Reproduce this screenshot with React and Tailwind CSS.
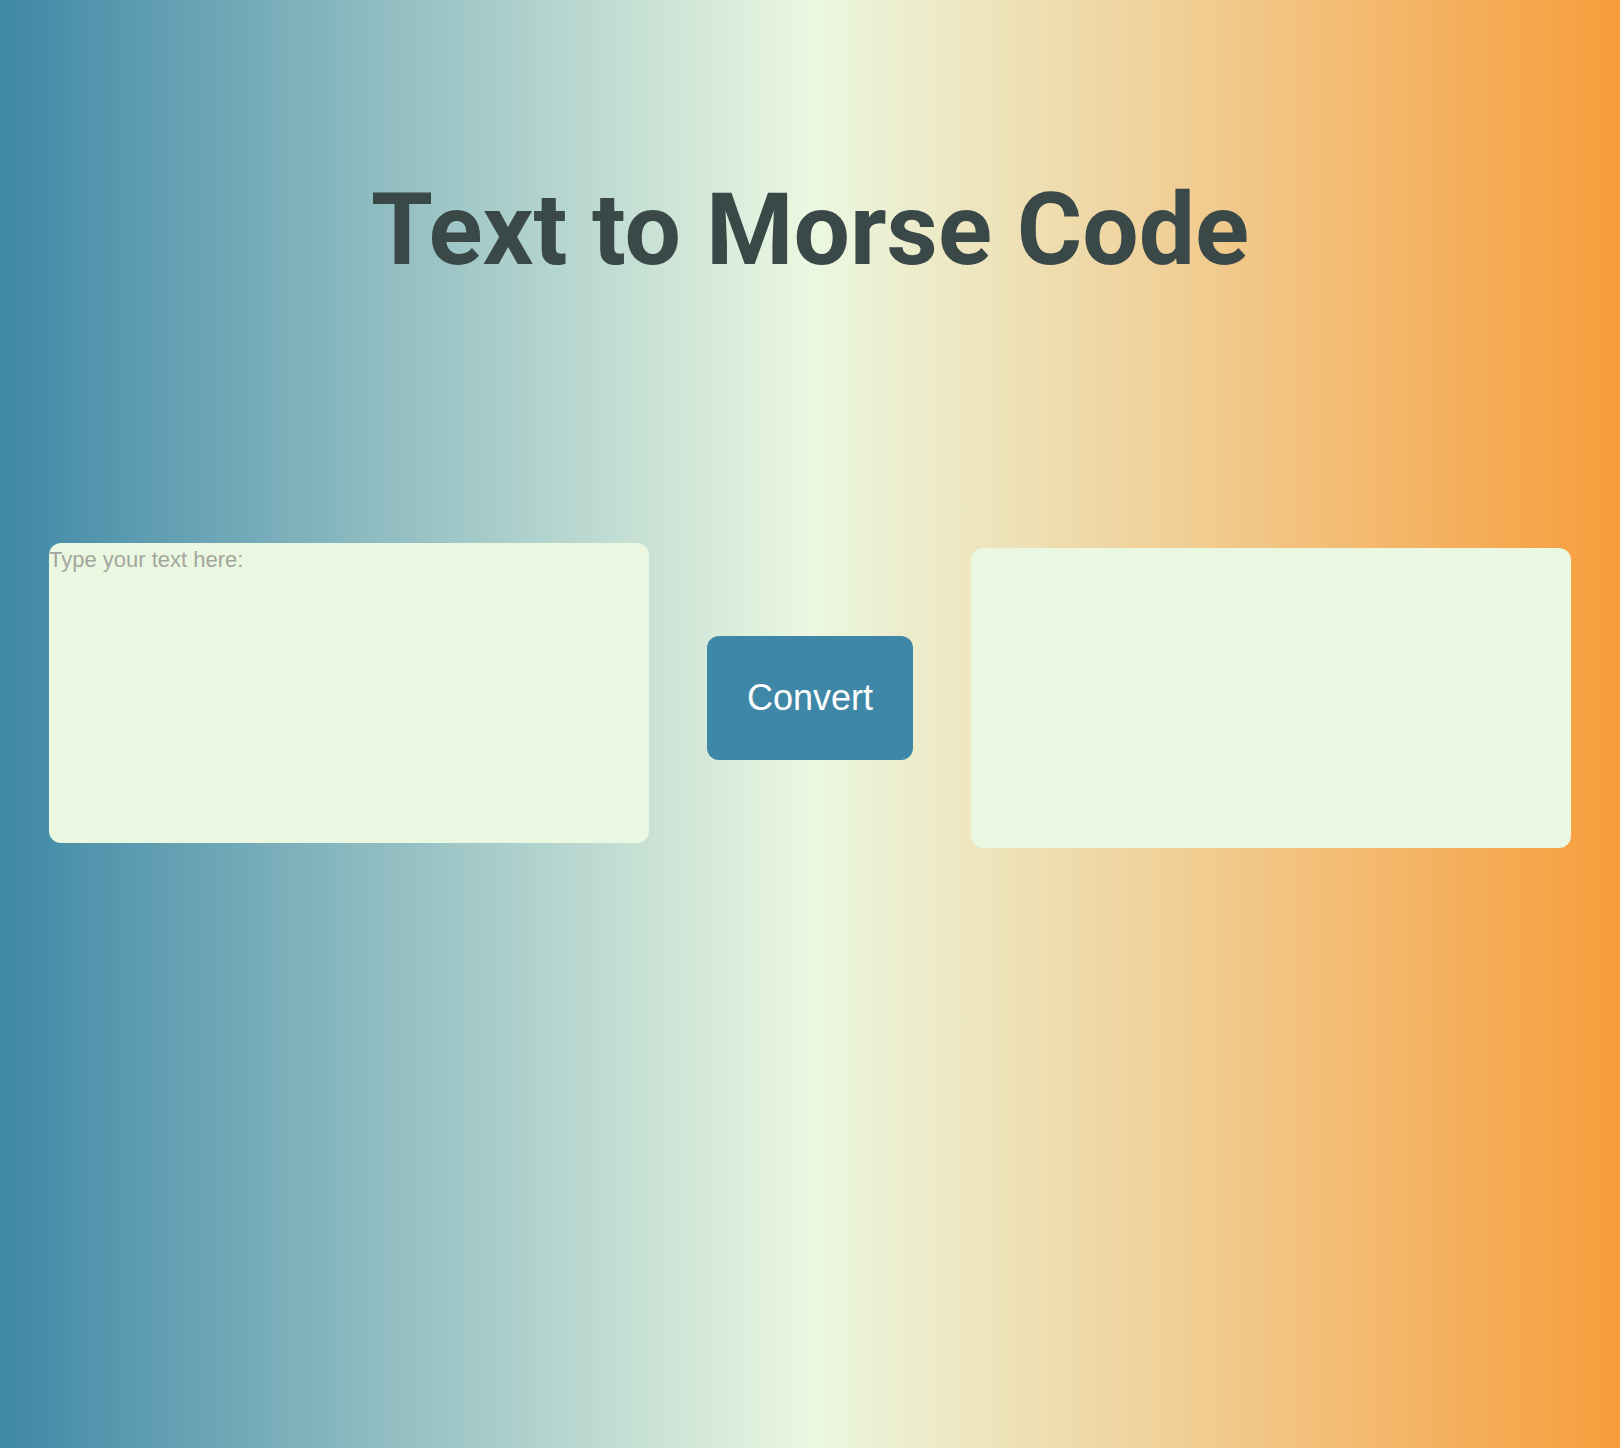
import React, { useState } from 'react';

const MORSE = {
  a: '.-', b: '-...', c: '-.-.', d: '-..', e: '.', f: '..-.', g: '--.', h: '....',
  i: '..', j: '.---', k: '-.-', l: '.-..', m: '--', n: '-.', o: '---', p: '.--.',
  q: '--.-', r: '.-.', s: '...', t: '-', u: '..-', v: '...-', w: '.--', x: '-..-',
  y: '-.--', z: '--..', 0: '-----', 1: '.----', 2: '..---', 3: '...--', 4: '....-',
  5: '.....', 6: '-....', 7: '--...', 8: '---..', 9: '----.', ' ': '/',
};

export default function App() {
  const [text, setText] = useState('');
  const [morse, setMorse] = useState('');

  const handleConvert = () => {
    setMorse(
      text
        .toLowerCase()
        .split('')
        .map((ch) => MORSE[ch] ?? '')
        .filter(Boolean)
        .join(' ')
    );
  };

  return (
    <div className="min-h-screen w-full bg-[linear-gradient(to_right,#3f88a6,#ebf8e1,#f79d3b)] font-['Liberation_Sans',Arial,sans-serif]">
      <h1 className="pt-[180px] text-center text-[100px] leading-none font-bold text-[#3a4848] font-['Roboto',sans-serif]">
        Text to Morse Code
      </h1>

      <div className="mt-[263px] flex items-center justify-between px-[49px]">
        <div className="pb-[10px]">
          <textarea
            value={text}
            onChange={(e) => setText(e.target.value)}
            placeholder="Type your text here:"
            className="block h-[300px] w-[600px] resize-none rounded-[12px] bg-[#ebf8e1] p-0 text-[22px] text-[#333] outline-none placeholder:text-[#a3a69f]"
          />
        </div>

        <button
          onClick={handleConvert}
          className="flex h-[124px] w-[206px] items-center justify-center rounded-[12px] bg-[#3e87a6] text-[36px] text-white cursor-pointer"
        >
          Convert
        </button>

        <div className="h-[300px] w-[600px] overflow-auto rounded-[12px] bg-[#ebf8e1] p-0 text-[22px] text-[#333] break-words">
          {morse}
        </div>
      </div>
    </div>
  );
}
